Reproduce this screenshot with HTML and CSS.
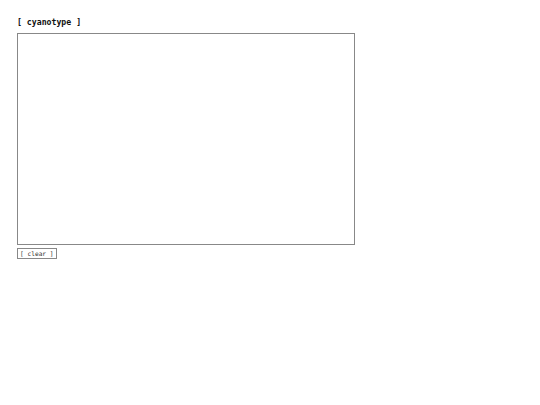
FILE: index.html
```html
<!DOCTYPE html>
<html lang="en">
  <head>
    <meta charset="UTF-8" />
    <meta name="viewport" content="width=device-width, initial-scale=1.0" />
    <link rel="stylesheet" href="styles.css">
    <title>cyanotype</title>
  </head>

  <body>
    <main class="page">
      <h1 class="page__title">[ cyanotype ]</h1>
      <canvas class="sheet" width="336" height="210"></canvas>
      <div class="controls">
        <button type="button" class="controls__btn">[ clear ]</button>
      </div>
    </main>
  </body>
</html>
```

FILE: styles.css
```css
body {
  margin: 0;
  background: #fff;
  color: #111;
  font-family: "DejaVu Sans Mono", "Liberation Mono", monospace;
}
.page {
  padding: 17px 17px;
}
.page__title {
  margin: 0 0 6px;
  font-size: 8.2px;
  font-weight: bold;
  line-height: 10px;
}
.sheet {
  display: block;
  border: 1px solid #888;
  background: #fff;
}
.controls {
  display: flex;
  margin-top: 3px;
}
.controls__btn {
  padding: 1px 2px;
  font-family: inherit;
  font-size: 6.2px;
  line-height: 7px;
  color: #333;
  background: #fff;
  border: 1px solid #888;
  border-radius: 0;
}
```
